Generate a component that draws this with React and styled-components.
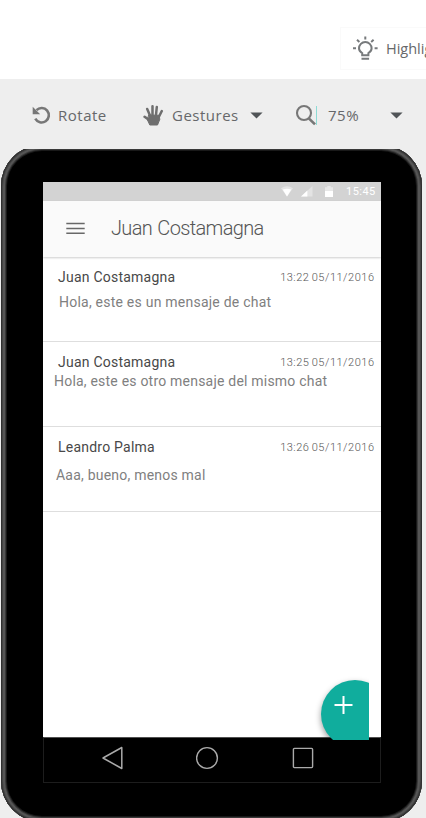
import React from "react";
import styled, { createGlobalStyle } from "styled-components";

const GlobalStyle = createGlobalStyle`
  * { box-sizing: border-box; }
  body { margin: 0; background: #eeeeee; overflow: hidden; }
`;

const Page = styled.div`
  width: 426px;
  height: 818px;
  overflow: hidden;
  display: flex;
  flex-direction: column;
  background: #eeeeee;
  font-family: "Open Sans", sans-serif;
  color: #66686a;
`;

const TopBar = styled.header`
  height: 79px;
  flex: none;
  display: flex;
  justify-content: flex-end;
  background: #fff;
  padding-top: 27px;
`;

const HighlightButton = styled.div`
  width: 86px;
  height: 43px;
  display: flex;
  align-items: center;
  gap: 7px;
  padding-left: 11px;
  border: 1px solid #fafafa;
  border-right: 0;
  overflow: hidden;
  white-space: nowrap;
  font-size: 14.5px;
  svg { flex: none; }
`;

const Toolbar = styled.nav`
  height: 70px;
  flex: none;
  display: flex;
  align-items: center;
  padding: 2px 0 0 32px;
  font-size: 15px;
`;

const Tool = styled.div`
  width: ${(p) => p.$width}px;
  height: 24px;
  flex: none;
  display: flex;
  align-items: center;
  white-space: nowrap;
  svg { flex: none; }
`;

const ToolLabel = styled.span`
  margin-left: ${(p) => p.$gap}px;
  width: ${(p) => p.$width}px;
  letter-spacing: 0.5px;
  line-height: 24px;
`;

const Cursor = styled.span`
  width: 1px;
  height: 19px;
  background: #8edbd5;
`;

const Stage = styled.main`
  height: 669px;
  overflow: hidden;
  padding-left: 1px;
`;

const Phone = styled.div`
  width: 421px;
  height: 677px;
  margin-top: -4px;
  padding: 37px 0 0 42px;
  border-radius: 41px;
  background: #000;
  box-shadow: inset 0 0 0 1px #303030, inset 0 0 0 2px #444, inset 0 0 0 4px #555,
    inset 0 0 0 5px #393939, inset 0 0 0 6px #191919;
`;

const Screen = styled.div`
  position: relative;
  width: 338px;
  height: 601px;
  display: flex;
  flex-direction: column;
  background: #fff;
  font-family: Roboto, sans-serif;
`;

const StatusBar = styled.div`
  height: 19px;
  flex: none;
  display: flex;
  align-items: center;
  padding-left: 238px;
  background: #d3d3d3;
  color: #fff;
`;

const SignalWrap = styled.span`
  display: flex;
  margin: 0 12px 0 8px;
`;

const Clock = styled.span`
  margin: 1px 0 0 13px;
  font-size: 11px;
  line-height: 18px;
  letter-spacing: 0.45px;
`;

const AppBar = styled.div`
  height: 56px;
  flex: none;
  display: flex;
  align-items: center;
  padding: 0 0 2px 23px;
  background: #fafafa;
  box-shadow: 0 1px 2px rgba(0, 0, 0, 0.2);
`;

const Title = styled.h1`
  margin: 0 0 0 26px;
  font-size: 20px;
  font-weight: 300;
  letter-spacing: -0.65px;
  word-spacing: 1px;
  color: #555;
`;

const ChatList = styled.ul`
  margin: 0;
  padding: 0;
  flex: 1;
  list-style: none;
`;

const ChatRow = styled.li`
  height: 85px;
  padding: 11px 7px 0 15px;
  border-bottom: 1px solid #dedede;
`;

const ChatHead = styled.div`
  height: 18px;
  display: flex;
  justify-content: space-between;
  align-items: center;
`;

const Sender = styled.span`
  font-size: 14px;
  letter-spacing: 0.23px;
  color: #484848;
  white-space: nowrap;
`;

const Stamp = styled.time`
  font-size: 11px;
  font-weight: 300;
  letter-spacing: 0.52px;
  word-spacing: -0.9px;
  margin-right: -0.5px;
  color: #555;
  white-space: nowrap;
`;

const Message = styled.p`
  margin: ${(p) => p.$top}px 0 0 ${(p) => p.$left}px;
  font-size: 14px;
  line-height: 18px;
  letter-spacing: ${(p) => p.$track}px;
  color: #808080;
  white-space: nowrap;
`;

const NavBar = styled.div`
  height: 46px;
  flex: none;
  display: flex;
  align-items: center;
  padding: 0 66px 4px 57px;
  justify-content: space-between;
  background: #000;
  border: 1px solid #1d1d1d;
  border-top-color: #505050;
`;

const FabClip = styled.div`
  position: absolute;
  right: 12px;
  bottom: 43px;
  width: 57px;
  height: 70px;
  overflow: hidden;
`;

const Fab = styled.div`
  width: 68px;
  height: 68px;
  margin: 9.5px 0 0 9px;
  padding: 15.5px 0 0 13px;
  border-radius: 50%;
  background: #10ad9d;
  box-shadow: 0 3px 6px rgba(0, 0, 0, 0.4);
  svg { display: block; }
`;

const chats = [
  { name: "Juan Costamagna", stamp: "13:22 05/11/2016", text: "Hola, este es un mensaje de chat", top: 7, left: 1, track: 0.23 },
  { name: "Juan Costamagna", stamp: "13:25 05/11/2016", text: "Hola, este es otro mensaje del mismo chat", top: 1, left: -4, track: 0.21 },
  { name: "Leandro Palma", stamp: "13:26 05/11/2016", text: "Aaa, bueno, menos mal", top: 10, left: -2, track: 0.22 },
];

const BulbIcon = () => (
  <svg width="27" height="28" viewBox="0 0 27 28" fill="none" stroke="#777a7c" strokeWidth="2">
    <path d="M10.2 20.2v-2.1c-2.1-1.1-3.2-2.7-3.2-4.8a6.3 6.3 0 0 1 12.6 0c0 2.1-1.1 3.7-3.2 4.8v2.1z" />
    <path d="M9.5 23.7h7.6M13.3 1.5v3M5 4.8l2.4 2.2M21.6 4.8 19.2 7M1 13.3h3M22.6 13.3h3" />
  </svg>
);

const RotateIcon = () => (
  <svg width="19" height="20" viewBox="0 0 19 20" fill="none" stroke="#777">
    <path d="M4.5 5.2A7.2 7.2 0 1 1 3.3 13.7" strokeWidth="2.6" />
    <path d="M.7 1.8v7.5h7.5z" fill="#777" stroke="none" />
  </svg>
);

const HandIcon = () => (
  <svg width="21" height="22" viewBox="0 0 21 22" fill="none" stroke="#6e6e6e" strokeLinecap="round" strokeLinejoin="round">
    <path d="m7.2 12-3-7M9.5 11V2.2M13 11l.8-8M15.8 13l3-6M6.8 16.4 1.6 12.8" strokeWidth="2.5" />
    <path d="m6 11 10 .3.8 4-2.3 5.7H6.8L4.6 16.2z" fill="#6e6e6e" strokeWidth="1" />
  </svg>
);

const Caret = () => (
  <svg width="13" height="8" viewBox="0 0 13 8">
    <path d="M.4 1.5h12.2L6.5 7.5z" fill="#505457" />
  </svg>
);

const SearchIcon = () => (
  <svg width="21" height="22" viewBox="0 0 21 22" fill="none" stroke="#777" strokeWidth="2.1">
    <circle cx="9" cy="9" r="7" />
    <path d="m13.8 14.4 6.2 6" strokeWidth="2.7" />
  </svg>
);

const WifiIcon = () => (
  <svg width="12" height="11" viewBox="0 0 12 11">
    <path d="M0 2.3Q6-1.6 12 2.3L6 10.5z" fill="#e5e5e5" />
    <path d="M1.7 3.6q4.3-1.7 8.6 0L6 10.5z" fill="#fff" />
  </svg>
);

const SignalIcon = () => (
  <svg width="12" height="11" viewBox="0 0 12 11">
    <path d="M11.5 0v10.5H0z" fill="#e3e3e3" />
    <path d="M6.4 4.6v5.9H0z" fill="#fff" />
  </svg>
);

const BatteryIcon = () => (
  <svg width="8" height="12" viewBox="0 0 8 12">
    <path d="M0 1.2h2.3V0h3.4v1.2H8V5H0z" fill="#e7e7e7" />
    <path d="M0 5h8v6H0z" fill="#fff" />
  </svg>
);

const MenuIcon = () => (
  <svg width="19" height="13" viewBox="0 0 19 13" stroke="#686868" strokeWidth="1.5">
    <path d="M.3 1.5h18.4M.3 6.4h18.4M.3 11.3h18.4" />
  </svg>
);

const BackIcon = () => (
  <svg width="22" height="24" viewBox="0 0 22 24">
    <path d="M2 12 20.8 1.5v21z" fill="none" stroke="#aaa" strokeWidth="1.5" strokeLinejoin="round" />
  </svg>
);

const HomeIcon = () => (
  <svg width="24" height="24" viewBox="0 0 24 24">
    <circle cx="11" cy="12" r="10.4" fill="none" stroke="#aaa" strokeWidth="1.4" />
  </svg>
);

const RecentIcon = () => (
  <svg width="22" height="22" viewBox="0 0 22 22">
    <rect x="1.4" y="1.4" width="19.2" height="19.2" rx="1" fill="none" stroke="#aaa" strokeWidth="1.4" />
  </svg>
);

const PlusIcon = () => (
  <svg width="19" height="20" viewBox="0 0 19 20" stroke="#fff" strokeWidth="2">
    <path d="M9.5 1v18M.5 10h18" />
  </svg>
);

export default function App() {
  return (
    <Page>
      <GlobalStyle />
      <TopBar>
        <HighlightButton>
          <BulbIcon />
          <span>Highlight</span>
        </HighlightButton>
      </TopBar>
      <Toolbar>
        <Tool $width={111}>
          <RotateIcon />
          <ToolLabel $gap={7}>Rotate</ToolLabel>
        </Tool>
        <Tool $width={152}>
          <HandIcon />
          <ToolLabel $gap={8} $width={78}>Gestures</ToolLabel>
          <Caret />
        </Tool>
        <Tool $width={131}>
          <SearchIcon />
          <Cursor />
          <ToolLabel $gap={11} $width={62}>75%</ToolLabel>
          <Caret />
        </Tool>
      </Toolbar>
      <Stage>
        <Phone>
          <Screen>
            <StatusBar>
              <WifiIcon />
              <SignalWrap><SignalIcon /></SignalWrap>
              <BatteryIcon />
              <Clock>15:45</Clock>
            </StatusBar>
            <AppBar>
              <MenuIcon />
              <Title>Juan Costamagna</Title>
            </AppBar>
            <ChatList>
              {chats.map((c) => (
                <ChatRow key={c.stamp}>
                  <ChatHead>
                    <Sender>{c.name}</Sender>
                    <Stamp>{c.stamp}</Stamp>
                  </ChatHead>
                  <Message $top={c.top} $left={c.left} $track={c.track}>{c.text}</Message>
                </ChatRow>
              ))}
            </ChatList>
            <NavBar>
              <BackIcon />
              <HomeIcon />
              <RecentIcon />
            </NavBar>
            <FabClip>
              <Fab><PlusIcon /></Fab>
            </FabClip>
          </Screen>
        </Phone>
      </Stage>
    </Page>
  );
}
